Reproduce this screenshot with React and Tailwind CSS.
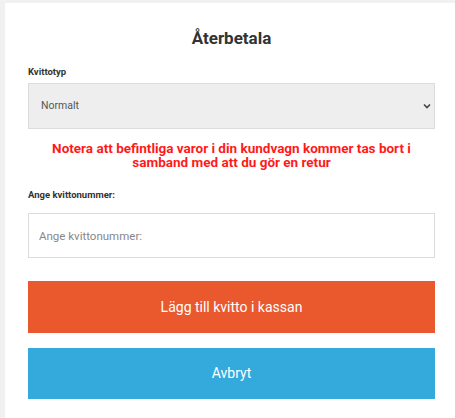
import React from "react";

export default function App() {
  return (
    <div className="min-h-screen bg-[#f1f1f1] pl-[5px] pt-[3px] font-['Roboto',sans-serif]">
      <div className="min-h-[415px] bg-white pl-[23px] pr-[20px] pt-[23px] pb-[18px]">
        <h1 className="text-center text-[17px] font-bold leading-[24px] text-[#333]">Återbetala</h1>

        <label className="mt-[16px] block text-[9.5px] font-bold leading-[12px] text-[#333]">Kvittotyp</label>
        <div className="relative mt-[5px]">
          <select className="h-[46px] w-full appearance-none border border-[#dcdcdc] bg-[#eeeeee] pl-[12px] text-[10.5px] text-[#555] outline-none">
            <option>Normalt</option>
          </select>
          <svg className="pointer-events-none absolute right-[4px] top-1/2 -translate-y-1/2" width="8" height="6" viewBox="0 0 8 6">
            <path d="M1 1.5 L4 4.5 L7 1.5" fill="none" stroke="#444" strokeWidth="1.6" />
          </svg>
        </div>

        <p className="mt-[12px] text-center text-[13.5px] font-bold leading-[14px] text-[#ff1a1a]">
          Notera att befintliga varor i din kundvagn kommer tas bort i samband med att du gör en retur
        </p>

        <label className="mt-[20px] block text-[9.5px] font-bold leading-[12px] text-[#333]">Ange kvittonummer:</label>
        <input
          className="mt-[12px] h-[45px] w-full border border-[#dcdcdc] bg-white px-[10px] text-[11.5px] text-[#555] outline-none placeholder:text-[#888]"
          placeholder="Ange kvittonummer:"
        />

        <button className="mt-[23px] flex h-[52px] w-full items-center justify-center bg-[#ea582d] text-[14px] text-white">
          Lägg till kvitto i kassan
        </button>
        <button className="mt-[15px] flex h-[51px] w-full items-center justify-center bg-[#34a9dc] text-[14px] text-white">
          Avbryt
        </button>
      </div>
    </div>
  );
}
